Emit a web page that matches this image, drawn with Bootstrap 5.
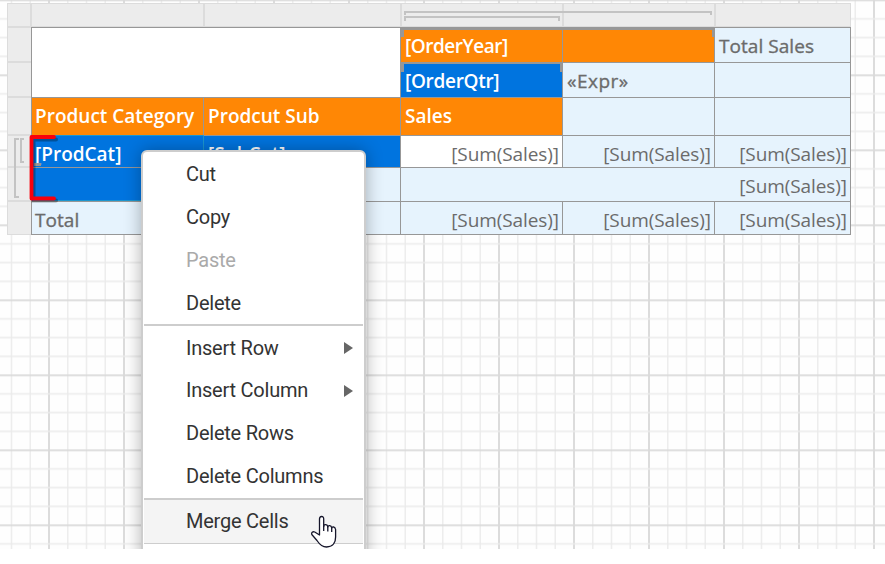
<!DOCTYPE html>
<html lang="en">
<head>
<meta charset="utf-8">
<title>Report designer</title>
<link rel="stylesheet" href="https://cdn.jsdelivr.net/npm/bootstrap@5.3.0/dist/css/bootstrap.min.css">
<style>
body{width:885px;height:564px;background:#fff;font-family:"Open Sans","Noto Sans",sans-serif}
.canvas{height:549px}
.backdrop{position:absolute;inset:0;width:885px;height:549px}
.designer{margin:3px 0 0 7px;width:844px;display:grid;grid-template-columns:24px 820px;grid-template-rows:24px 208px}
.corner-box{background:#ececec;border:1px solid #dcdcdc;border-right:0}
.col-heads{display:grid;grid-template-columns:173px 197px 162px 152px 136px;background:#ececec;border:solid #dcdcdc;border-width:1px 1px 1px 0;margin-left:-1px}
.col-heads>div{border-left:2px solid #dcdcdc}
.row-heads{display:grid;grid-template-rows:35px 35px 38px 32px 34px;background:#ececec;border:solid #dcdcdc;border-width:1px 0 1px 1px;overflow:hidden}
.row-heads>div{border-bottom:2px solid #dcdcdc}
.tablix{display:grid;grid-template-columns:172px 197px 162px 152px 136px;grid-template-rows:35px 35px 38px 32px 34px 33px;border:solid #979797;border-width:0 1px 1px 0;background:#e6f3fd}
.cell{border:solid #979797;border-width:1px 0 0 1px;padding:5px 3px 0 4px;line-height:27px;font-size:19px;color:#6b6b6b;white-space:nowrap;overflow:hidden}
.cell.first{padding-left:3px}
.cell.num{text-align:right;letter-spacing:-.08px}
.cell.hd{background:#ff8705;color:#fff;font-weight:600}
.cell.sel{background:#0074df;color:#fff;font-weight:600}
.cell.semi{-webkit-text-stroke:.35px #6b6b6b;letter-spacing:.05px}
.cell.expr{letter-spacing:.5px}
.cell.year{letter-spacing:-.48px}
.cell.qtr{letter-spacing:-.3px}
.marks{position:absolute;left:0;top:0}
.ctx{position:absolute;left:141px;top:150px;width:225px;height:440px;border:2px solid #cdcdcd;border-radius:6px;background:#fff;box-shadow:0 0 17px rgba(0,0,0,.3);font-family:Roboto,sans-serif;font-size:20px;letter-spacing:-.23px;color:#333;padding:0 1px}
.ctx .item{height:43px;line-height:44px;padding:0 10px 0 42px}
.ctx .item.up{line-height:42px}
.ctx .item.up.d-flex{padding-bottom:2px}
.ctx .item.up .tri{margin-top:2px}
.ctx .item.off{color:#aaa}
.ctx .item.hot{background:#f4f4f4}
.ctx .rule{height:2px;background:#cdcdcd}
.ctx .rule.thin{height:1px}
.tri{width:0;height:0;border:solid transparent;border-width:6px 0 6px 9px;border-left-color:#666}
.pointer{position:absolute;left:310px;top:515px}
</style>
</head>
<body>
<div class="canvas position-relative overflow-hidden">
<svg class="backdrop">
<defs><pattern id="g" width="75" height="75" patternUnits="userSpaceOnUse" x="48" y="-.6">
<path d="M19.75 0V75M38.5 0V75M57.25 0V75" stroke="#ededed" stroke-width="1.6"/>
<path d="M1 0V75" stroke="#dcdcdc" stroke-width="2"/>
<path d="M0 .9H75" stroke="#dadada" stroke-width="1.8"/>
<path d="M0 19.5H75M0 38.2H75M0 57H75" stroke="#ebebeb" stroke-width="1.6"/>
</pattern></defs>
<rect width="885" height="549" fill="#fefefe"/><rect width="885" height="549" fill="url(#g)"/>
</svg>
<div class="d-flex position-relative">
<div class="designer">
<div class="corner-box"></div>
<div class="col-heads"><div></div><div></div><div></div><div></div><div></div></div>
<div class="row-heads"><div></div><div></div><div></div><div></div><div></div></div>
<div class="tablix">
<div class="cell bg-white" style="grid-area:1/1/3/3"></div>
<div class="cell hd year">[OrderYear]</div><div class="cell hd"></div><div class="cell semi">Total Sales</div>
<div class="cell sel qtr">[OrderQtr]</div><div class="cell semi expr">«Expr»</div><div class="cell"></div>
<div class="cell hd first">Product Category</div><div class="cell hd">Prodcut Sub</div><div class="cell hd">Sales</div><div class="cell"></div><div class="cell"></div>
<div class="cell sel first">[ProdCat]</div><div class="cell sel">[SubCat]</div><div class="cell num bg-white">[Sum(Sales)]</div><div class="cell num">[Sum(Sales)]</div><div class="cell num">[Sum(Sales)]</div>
<div class="cell sel"></div><div class="cell"></div><div class="cell num" style="grid-column:span 3">[Sum(Sales)]</div>
<div class="cell semi first">Total</div><div class="cell"></div><div class="cell num">[Sum(Sales)]</div><div class="cell num">[Sum(Sales)]</div><div class="cell num">[Sum(Sales)]</div>
</div>
</div>
</div>
<svg class="marks" width="885" height="240" fill="none">
<g stroke="#c3c3c3" stroke-width="2"><path d="M405 15V12H711V15M405 21V17H559V21M19 139H15V197H19M24 139H21V162H24"/></g>
<path d="M401 27H715V37H712V30H404V37H401ZM401 62H562V72H560V64H404V72H401ZM34 163H41V166H34Z" fill="#979797"/>
<path d="M33 135.5H203.5V200.5H33" stroke="#1c96cf"/>
<path d="M54 137.5H31.5V198.5H54" stroke="#000" stroke-opacity=".3" stroke-width="4" stroke-linecap="round" transform="translate(2 2)"/>
<path d="M54 137H31.5V198.5H54" stroke="#f8000c" stroke-width="3.8" stroke-linecap="round" stroke-linejoin="round"/>
</svg>
<div class="ctx">
<div class="item">Cut</div><div class="item">Copy</div><div class="item off">Paste</div><div class="item">Delete</div>
<div class="rule"></div>
<div class="item d-flex align-items-center justify-content-between">Insert Row<i class="tri"></i></div>
<div class="item up d-flex align-items-center justify-content-between">Insert Column<i class="tri"></i></div>
<div class="item up">Delete Rows</div><div class="item up">Delete Columns</div>
<div class="rule"></div>
<div class="item hot up">Merge Cells</div>
<div class="rule thin"></div>
</div>
<svg class="pointer" width="28" height="34" viewBox="0 0 28 34">
<path d="M9.5 20V4Q9.5 1.5 11.6 1.5T13.7 4V11.5Q14 9.5 15.8 9.7T17.8 12Q18 10.5 19.7 10.7T21.7 13Q22 11.7 23.6 12T25.6 14.5V22C25.6 26 24 32 16.5 32C11 32 9 28.5 7 25.5L1.8 19.5C1 17.5 2.8 16.2 4.7 17Z" fill="#fff" stroke="#15152a" stroke-width="1.3" stroke-linejoin="round"/>
<path d="M13.7 11V16M17.8 11.5V16.5M21.7 12.5V17" stroke="#15152a" stroke-width="1.3"/>
</svg>
</div>
<script src="https://cdn.jsdelivr.net/npm/bootstrap@5.3.0/dist/js/bootstrap.bundle.min.js"></script>
</body>
</html>
